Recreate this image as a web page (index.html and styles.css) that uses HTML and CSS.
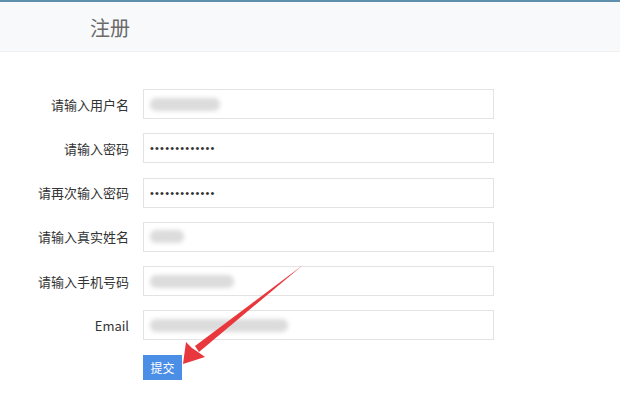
FILE: index.html
```html
<!DOCTYPE html>
<html lang="zh-CN">
<head>
    <meta charset="UTF-8">
    <title>注册</title>
    <link rel="stylesheet" href="styles.css">
</head>
<body>
<div class="page-head">
    <h1>注册</h1>
</div>

<form class="reg-form" onsubmit="return false">
    <div class="row">
        <label for="username">请输入用户名</label>
        <div class="field"><span class="smudge" style="width:70px"></span></div>
    </div>
    <div class="row">
        <label for="pwd">请输入密码</label>
        <div class="field"><span class="dots">•••••••••••••</span></div>
    </div>
    <div class="row">
        <label for="pwd2">请再次输入密码</label>
        <div class="field"><span class="dots">•••••••••••••</span></div>
    </div>
    <div class="row">
        <label for="realname">请输入真实姓名</label>
        <div class="field"><span class="smudge" style="width:34px"></span></div>
    </div>
    <div class="row">
        <label for="phone">请输入手机号码</label>
        <div class="field"><span class="smudge" style="width:84px"></span></div>
    </div>
    <div class="row">
        <label for="email">Email</label>
        <div class="field"><span class="smudge" style="width:138px"></span></div>
    </div>
    <div class="row">
        <span class="spacer"></span>
        <button type="submit" class="btn-submit">提交</button>
    </div>
</form>

<svg class="pointer" width="620" height="398" viewBox="0 0 620 398">
    <polygon points="303,265 199,352 195,346" fill="#e8383d"/>
    <polygon points="183,364 186,342 192,348 198,352 205,357" fill="#e8383d"/>
</svg>
</body>
</html>
```

FILE: styles.css
```css
body {
    margin: 0;
    background: #fff;
    font-family: "Noto Sans CJK SC", "Noto Sans", sans-serif;
    color: #333;
    position: relative;
    height: 398px;
    overflow: hidden;
}

.page-head {
    border-top: 2px solid #5f8fab;
    background: #f8f9fa;
    border-bottom: 1px solid #f0f0f0;
    height: 49px;
}

.page-head h1 {
    margin: 0;
    padding-left: 90px;
    font-size: 20px;
    font-weight: normal;
    line-height: 52px;
    color: #6a6a6a;
}

.reg-form {
    margin-top: 37px;
    display: flex;
    flex-direction: column;
    gap: 14.3px;
}

.row {
    display: flex;
    align-items: center;
    gap: 14px;
}

.row label,
.row .spacer {
    width: 129px;
    text-align: right;
    font-size: 13px;
    color: #333;
}

.field {
    height: 28px;
    border: 1px solid #e3e3e3;
    background: #fff;
    display: flex;
    align-items: center;
    padding-left: 6px;
    width: 343px;
}

.smudge {
    display: inline-block;
    height: 13px;
    background: #dcdcdc;
    border-radius: 6px;
    filter: blur(2px);
}

.dots {
    font-family: "Liberation Sans", Arial, sans-serif;
    font-size: 11px;
    letter-spacing: 1.2px;
    color: #333;
}

.btn-submit {
    width: 39px;
    height: 25px;
    border: none;
    padding: 0;
    background: #4a8ee6;
    color: #fff;
    font-family: inherit;
    font-size: 12px;
}

.pointer {
    position: absolute;
    left: 0;
    top: 0;
}
```
